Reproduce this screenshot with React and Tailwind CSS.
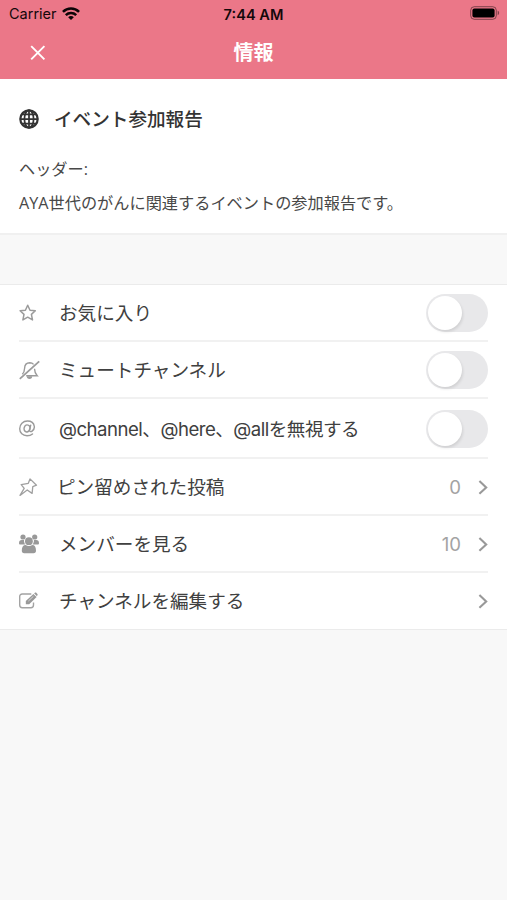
// src/screens/ChannelInfo.jsx
import clsx from "clsx";

const LATIN_INTER = "font-['Inter','Noto_Sans_CJK_JP',sans-serif]";
const LATIN_OPEN = "font-['Open_Sans','Noto_Sans_CJK_JP',sans-serif]";

function WifiIcon() {
  return (
    <svg width="18" height="14" viewBox="0 0 19 14" fill="none" stroke="#0c0406" strokeWidth="2.7">
      <path d="M1 4.8C5.8 0.1 13.2 0.1 18 4.8" />
      <path d="M4 8.2C7.1 5.3 11.9 5.3 15 8.2" />
      <path d="M9.5 13.3L6.5 10.3C8.2 8.8 10.8 8.8 12.5 10.3Z" fill="#0c0406" stroke="none" />
    </svg>
  );
}

function BatteryIcon() {
  return (
    <svg width="30" height="14" viewBox="0 0 30 14" fill="none">
      <rect x="0.7" y="0.7" width="25.6" height="12.6" rx="3.6" stroke="#000" strokeOpacity="0.45" />
      <rect x="2.4" y="2.4" width="22.2" height="9.2" rx="2" fill="#000" />
      <path d="M27.7 4.8C29.6 5.4 29.6 8.6 27.7 9.2Z" fill="#000" fillOpacity="0.45" />
    </svg>
  );
}

function GlobeIcon() {
  return (
    <svg width="20" height="20" viewBox="0 0 20 20" fill="none" stroke="#333" strokeWidth="1.75">
      <circle cx="10" cy="10" r="8.7" strokeWidth="2.2" />
      <ellipse cx="10" cy="10" rx="4.6" ry="8.8" />
      <path d="M10 1V19M1 10H19M2.4 5.4H17.6M2.4 14.6H17.6" />
    </svg>
  );
}

function StarIcon() {
  return (
    <svg width="20" height="20" viewBox="0 0 20 20" fill="none" stroke="#9b9b9b" strokeWidth="1.5" strokeLinejoin="round">
      <path d="M8.7 2.2L11 7.2L16.3 7.8L12.4 11.4L13.5 16.9L8.7 14.2L3.9 16.9L5 11.4L1.1 7.8L6.4 7.2Z" />
    </svg>
  );
}

function BellOffIcon() {
  return (
    <svg width="22" height="20" viewBox="0 0 22 20" fill="none" stroke="#9b9b9b" strokeWidth="1.4">
      <path d="M3.3 14.2C5.2 12.5 5.5 11 5.6 8.2C5.7 4.8 7.6 2.9 10.8 2.8C12.4 2.8 13.7 3.4 14.6 4.4" />
      <path d="M15.5 8.8C15.6 12 16.4 13.9 18.2 15.7H7.2" />
      <path d="M7.8 16.2H13.2A2.7 2.7 0 0 1 7.8 16.2Z" fill="#9b9b9b" stroke="none" />
      <path d="M0.8 18.8L20.2 1.4" strokeWidth="1.8" />
    </svg>
  );
}

function AtIcon() {
  return (
    <svg width="20" height="20" viewBox="0 0 20 20" fill="none" stroke="#9b9b9b" strokeWidth="1.4" strokeLinecap="round">
      <ellipse cx="8" cy="9.4" rx="2.9" ry="3.5" transform="rotate(18 8 9.4)" />
      <path d="M11.7 6.1L10.6 11.1C10.4 12.7 11.8 13.1 13.1 12.1C14.8 10.9 15.6 9.2 15.3 7.3C14.8 3.8 11.9 2 8.4 2C4 2 0.7 5.4 0.7 9.7C0.7 14 3.8 16.8 8 16.8C10.2 16.8 12.1 16.2 13.5 14.9" />
    </svg>
  );
}

function PinIcon() {
  return (
    <svg width="20" height="20" viewBox="0 0 20 20" fill="none" stroke="#a0a0a0" strokeWidth="1.3" strokeLinejoin="round">
      <path d="M11 1.9L17.5 8.2L13.8 9.6L13.1 16.4L8.2 13L1 18.4L5.2 11.4L2.2 7.6L9.3 6.3Z" />
    </svg>
  );
}

function MembersIcon() {
  return (
    <svg width="20" height="20" viewBox="0 0 20 20" fill="#999">
      <circle cx="4" cy="3" r="2.6" />
      <circle cx="15.7" cy="3" r="2.6" />
      <path d="M0 9.2C0 7.2 1 6 2.8 6H5C4.9 8 5.4 9.4 6.4 10.6H1.4C0.5 10.6 0 10.1 0 9.2Z" />
      <path d="M20 9.2C20 7.2 19 6 17.2 6H14.9C15 8 14.5 9.4 13.5 10.6H18.6C19.5 10.6 20 10.1 20 9.2Z" />
      <circle cx="9.9" cy="7.2" r="3.9" />
      <path d="M2.8 16.7C2.8 13 4.1 11 6.6 11C8.7 12.4 11.2 12.4 13.3 11C15.8 11 17 13 17 16.7C17 18.3 16.2 19.2 14.6 19.2H5.2C3.6 19.2 2.8 18.3 2.8 16.7Z" />
    </svg>
  );
}

function EditIcon() {
  return (
    <svg width="20" height="20" viewBox="0 0 20 20" fill="none" stroke="#a3a3a3" strokeWidth="1.4">
      <path d="M12.3 3H3.3C1.6 3 0.7 3.9 0.7 5.6V14C0.7 15.8 1.6 16.7 3.3 16.7H11.9C13.6 16.7 14.5 15.8 14.5 14V11.4" />
      <path d="M6.8 13.2V9.9L14.4 2.9L17.6 6.1L10.2 13.2Z" fill="#999" stroke="none" />
      <path d="M15.1 2.3L15.9 1.7C16.4 1.3 16.9 1.4 17.3 1.8L18.4 3C18.8 3.4 18.7 4 18.3 4.4L17.9 5.3Z" fill="#999" stroke="none" />
      <path d="M9.4 10L14.4 5.3" stroke="#fff" strokeWidth="0.6" />
    </svg>
  );
}

function Chevron() {
  return (
    <svg width="10" height="16" viewBox="0 0 10 16" fill="none" stroke="#999" strokeWidth="2.1">
      <path d="M1.4 2L8.2 8.4L1.4 14.8" />
    </svg>
  );
}

function Toggle() {
  return (
    <button type="button" role="switch" aria-checked="false" className="flex h-[38px] w-[62px] items-center rounded-full bg-[#e8e8ea] p-0.5">
      <span className="size-[34px] rounded-full bg-white shadow-[1px_2px_3px_rgba(0,0,0,0.1)]" />
    </button>
  );
}

const ROWS = [
  { icon: StarIcon, label: "お気に入り", toggle: true, height: "h-[57px]" },
  { icon: BellOffIcon, label: "ミュートチャンネル", toggle: true, height: "h-[57px]" },
  {
    icon: AtIcon,
    label: "@channel、@here、@allを無視する",
    toggle: true,
    height: "h-[60px] pt-px",
    textClass: "tracking-[-0.5px]",
  },
  { icon: PinIcon, label: "ピン留めされた投稿", count: 0, height: "h-[57px]", textClass: "-ml-0.5" },
  { icon: MembersIcon, label: "メンバーを見る", count: 10, height: "h-[57px]" },
  { icon: EditIcon, label: "チャンネルを編集する", height: "h-[56px]" },
];

function Row({ icon: Icon, label, toggle, count, height, textClass, last }) {
  return (
    <div className={clsx("flex items-center", height, !last && "border-b-2 border-[#f1f1f1]")}>
      <span className="w-10 shrink-0">
        <Icon />
      </span>
      <span className={clsx("flex-1 whitespace-nowrap text-[18.6px] leading-6 text-[#404040]", textClass)}>{label}</span>
      {toggle ? (
        <Toggle />
      ) : (
        <>
          {count !== undefined && (
            <span className="mr-[17px] pt-px text-[18.6px] leading-6 text-[#a3a3a3]">{count}</span>
          )}
          <Chevron />
        </>
      )}
    </div>
  );
}

export default function App() {
  return (
    <div className={clsx("flex h-[900px] w-[507px] flex-col overflow-hidden bg-[#f8f8f8]", LATIN_INTER)}>
      <header className="h-[79px] bg-[#eb7788]">
        <div className="grid h-[27px] grid-cols-3 items-center pl-[9px] pr-[7px] text-[#14080a]">
          <div className="flex items-center gap-[5px] text-[14.5px]">
            Carrier
            <WifiIcon />
          </div>
          <div className="pr-0.5 pt-0.5 text-center text-[14.6px] font-semibold leading-5">7:44 AM</div>
          <div className="flex justify-end pb-px">
            <BatteryIcon />
          </div>
        </div>
        <div className="grid h-[52px] grid-cols-3 items-center pb-px">
          <svg className="ml-[30px]" width="16" height="16" viewBox="0 0 16 16" stroke="#fff" strokeWidth="1.9">
            <path d="M1.2 1.2L14.4 14.4M14.4 1.2L1.2 14.4" />
          </svg>
          <h1 className="pt-px text-center text-[20px] font-bold leading-6 text-white">情報</h1>
        </div>
      </header>

      {/* Channel summary */}
      <section className="h-[156px] border-b-2 border-[#f0f0f0] bg-white px-[19px] pt-7">
        <div className="flex h-6 items-center gap-[15px]">
          <GlobeIcon />
          <h2 className="text-[18.6px] font-medium leading-6 text-[#333]">イベント参加報告</h2>
        </div>
        <p className={clsx("mt-[26px] text-[16.2px] leading-6 text-[#484848]", LATIN_OPEN)}>ヘッダー:</p>
        <p className={clsx("mt-2.5 whitespace-nowrap text-[16.2px] leading-6 text-[#484848]", LATIN_OPEN)}>
          AYA世代のがんに関連するイベントの参加報告です。
        </p>
      </section>

      {/* Channel actions */}
      <section className="mt-[49px] border-y border-[#ebebeb] bg-white px-[19px]">
        {ROWS.map((row, i) => (
          <Row key={row.label} {...row} last={i === ROWS.length - 1} />
        ))}
      </section>
    </div>
  );
}
